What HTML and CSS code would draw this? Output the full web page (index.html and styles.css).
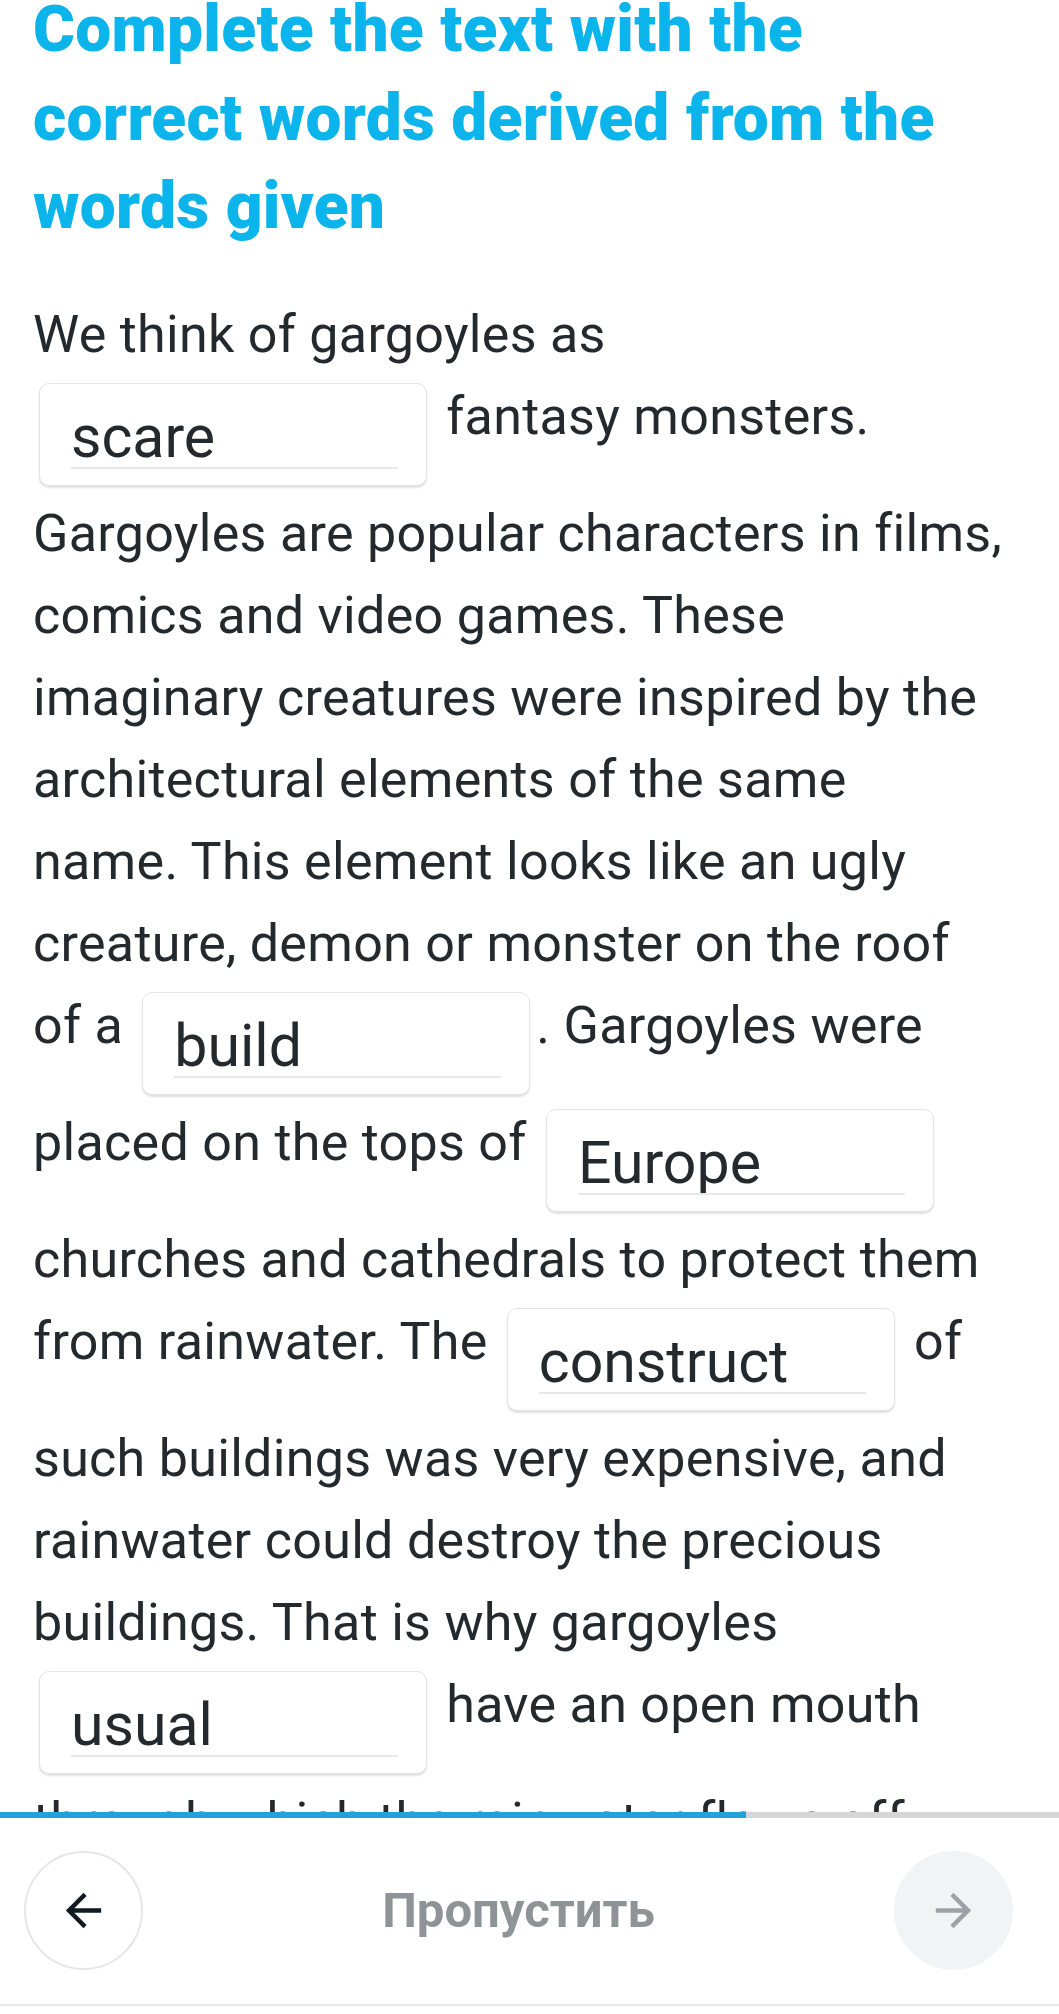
FILE: index.html
```html
<!DOCTYPE html>
<html lang="en">
<head>
    <meta charset="UTF-8">
    <meta name="viewport" content="width=device-width, initial-scale=1.0">
    <title>Word Formation</title>
    <link rel="stylesheet" href="styles.css">
</head>
<body>
    <div class="screen">
        <main class="content">
            <h1 class="task-title">Complete the text with the<br>correct words derived from the<br>words given</h1>

            <p class="task-text">
                We think of gargoyles as<br>
                <span class="gap"><input class="gap-input" type="text" value="scare"></span> fantasy monsters.<br>
                Gargoyles are popular characters in films,<br>
                comics and video games. These<br>
                imaginary creatures were inspired by the<br>
                architectural elements of the same<br>
                name. This element looks like an ugly<br>
                creature, demon or monster on the roof<br>
                of a <span class="gap"><input class="gap-input" type="text" value="build"></span>. Gargoyles were<br>
                placed on the tops of <span class="gap"><input class="gap-input" type="text" value="Europe"></span><br>
                churches and cathedrals to protect them<br>
                from rainwater. The <span class="gap"><input class="gap-input" type="text" value="construct"></span> of<br>
                such buildings was very expensive, and<br>
                rainwater could destroy the precious<br>
                buildings. That is why gargoyles<br>
                <span class="gap"><input class="gap-input" type="text" value="usual"></span> have an open mouth<br>
                through which the rainwater flows off
            </p>
        </main>

        <footer class="bottom-bar">
            <div class="progress">
                <div class="progress-fill" style="width: 70.4%"></div>
            </div>
            <nav class="nav">
                <button class="nav-btn nav-back" type="button">
                    <svg viewBox="0 0 24 24" width="53" height="53"><path d="M20 11H7.83l5.59-5.59L12 4l-8 8 8 8 1.41-1.41L7.83 13H20v-2z"/></svg>
                </button>
                <button class="skip" type="button">Пропустить</button>
                <button class="nav-btn nav-next" type="button">
                    <svg viewBox="0 0 24 24" width="53" height="53"><path d="M12 4l-1.41 1.41L16.17 11H4v2h12.17l-5.58 5.59L12 20l8-8z"/></svg>
                </button>
            </nav>
        </footer>
    </div>
</body>
</html>
```

FILE: styles.css
```css
body {
    margin: 0;
    font-family: Roboto, "Noto Sans", sans-serif;
    background-color: #fff;
    color: #24292d;
}
.screen {
    height: 100vh;
    display: flex;
    flex-direction: column;
}
.content {
    flex: 1;
    overflow: hidden;
    padding: 0 30px 0 33px;
}
.task-title {
    margin: -14px 0 42px;
    font-size: 64px;
    line-height: 88.6px;
    font-weight: 900;
    letter-spacing: 0.3px;
    color: #0cb4ec;
    white-space: nowrap;
}
.task-text {
    margin: 0;
    font-size: 52px;
    line-height: 82px;
    letter-spacing: 0.3px;
    white-space: nowrap;
}
.gap {
    display: inline-block;
    vertical-align: top;
    box-sizing: border-box;
    width: 388px;
    height: 103px;
    margin: 7px 6px;
    padding: 23px 28px 0 31px;
    background-color: #fff;
    border: 1px solid #e4e4e4;
    border-radius: 10px;
    box-shadow: 0 2px 2px rgba(0, 0, 0, 0.12);
}
.gap-input {
    display: block;
    box-sizing: border-box;
    width: 100%;
    height: 62px;
    padding: 0;
    border: none;
    border-bottom: 2px solid #e8e8e8;
    background: transparent;
    font-family: Roboto, "Noto Sans", sans-serif;
    font-size: 59px;
    line-height: 60px;
    color: #24292d;
    outline: none;
}
.bottom-bar {
    flex: none;
    background-color: #fff;
    padding-bottom: 8px;
}
.progress {
    height: 6px;
    background-color: #d6d6d6;
}
.progress-fill {
    height: 100%;
    background-color: #1fa3da;
}
.nav {
    display: flex;
    align-items: center;
    padding: 33px 46px 34px 24px;
    border-bottom: 2px solid #e9e9e9;
}
.nav-btn {
    flex: none;
    box-sizing: border-box;
    width: 119px;
    height: 119px;
    padding: 0;
    border-radius: 50%;
    display: flex;
    align-items: center;
    justify-content: center;
    cursor: pointer;
}
.nav-back {
    background-color: #fff;
    border: 2px solid #e6e6e6;
}
.nav-back svg {
    fill: #111a22;
}
.nav-next {
    background-color: #f2f3f4;
    border: 2px solid #f2f3f4;
}
.nav-next svg {
    fill: #9ea2a6;
}
.skip {
    flex: 1;
    background: none;
    border: none;
    padding: 0;
    font-family: Roboto, "Noto Sans", sans-serif;
    font-size: 49px;
    font-weight: 700;
    color: #8e9396;
    cursor: pointer;
}
```
